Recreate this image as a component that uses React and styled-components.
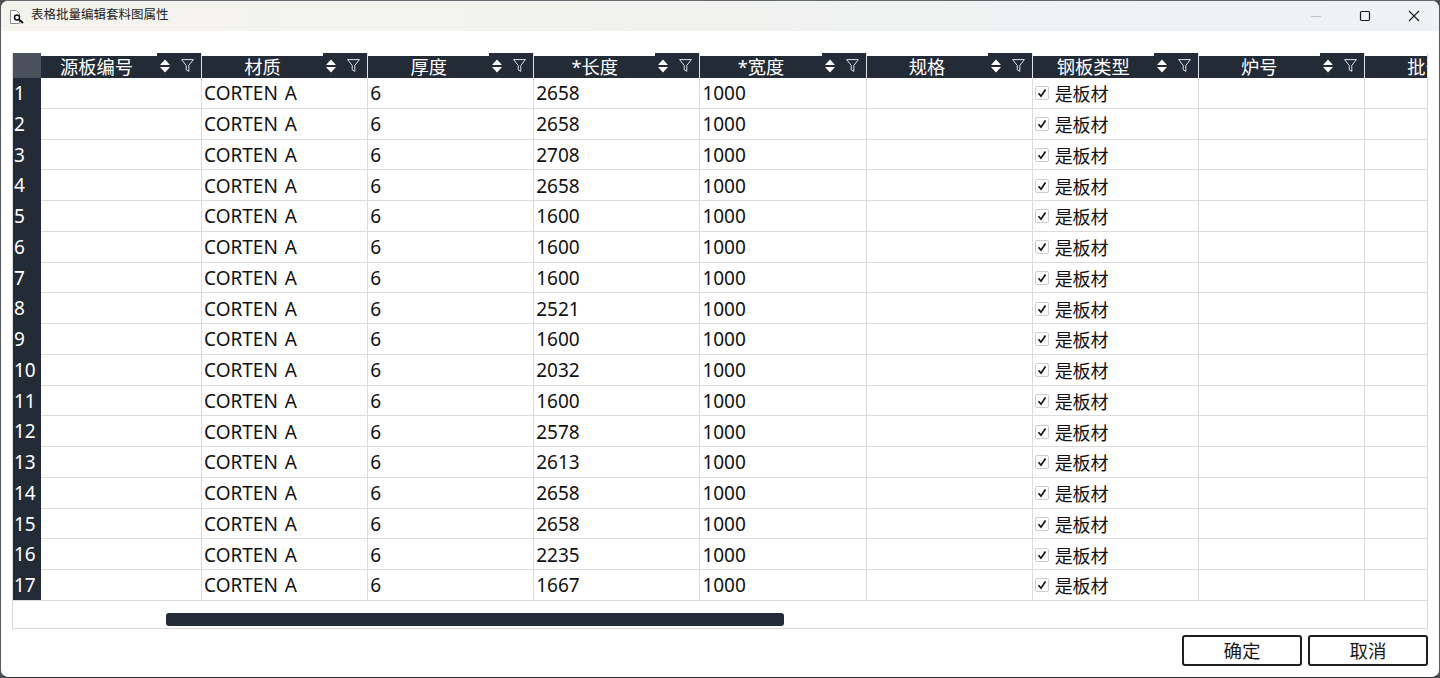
import React from 'react'
import styled, { createGlobalStyle } from 'styled-components'

const rows = [
  2658, 2658, 2708, 2658, 1600, 1600, 1600, 2521, 1600,
  2032, 1600, 2578, 2613, 2658, 2658, 2235, 1667
]

const columns = [
  { title: '源板编号', first: true },
  { title: '材质', value: () => 'CORTEN A' },
  { title: '厚度', value: () => '6' },
  { title: '*长度', value: (length) => length },
  { title: '*宽度', value: () => '1000' },
  { title: '规格' },
  { title: '钢板类型', check: true },
  { title: '炉号' },
  { title: '批号' }
]

const GlobalStyle = createGlobalStyle`
  html, body {
    margin: 0;
    padding: 0;
    background: #4b4f55;
  }
`

const Window = styled.div`
  width: 1440px;
  height: 678px;
  box-sizing: border-box;
  display: flex;
  flex-direction: column;
  overflow: hidden;
  background: #ffffff;
  border-radius: 8px;
  border-top: 1px solid #66696e;
  border-right: 1px solid #55585c;
  border-bottom: 1px solid #2b2d30;
  border-left: 1px solid #55585c;
  font-family: "Noto Sans", "Noto Sans CJK SC", sans-serif;
`

const TitleBar = styled.div`
  height: 30px;
  flex: none;
  display: flex;
  align-items: center;
  background: linear-gradient(90deg, #f5f3ee 0%, #f2f3f0 45%, #edf2f6 100%);
`

const AppIcon = styled.svg`
  width: 16px;
  height: 16px;
  margin-left: 9px;
  margin-right: 5px;
`

const TitleText = styled.div`
  flex: 1;
  font-size: 12.5px;
  line-height: 28px;
  height: 30px;
  color: #222222;
`

const WindowButton = styled.svg`
  width: 12px;
  height: 12px;
  margin-right: ${(props) => props.$gap}px;
`

const Content = styled.div`
  flex: 1;
  display: flex;
  flex-direction: column;
  padding: 22px 11px 11px 11px;
  min-height: 0;
`

const TableFrame = styled.div`
  width: 1416px;
  height: 576px;
  box-sizing: border-box;
  flex: none;
  border: 1px solid #d9d9d9;
  border-top: none;
  overflow: hidden;
  display: flex;
  flex-direction: column;
`

const HeaderRow = styled.div`
  display: flex;
  height: 25px;
  flex: none;
`

const Corner = styled.div`
  width: 28px;
  flex: none;
  background-color: #4b515b;
  background-image: radial-gradient(#5c626b 0.6px, transparent 0.7px);
  background-size: 4px 4px;
`

const HeaderCell = styled.div`
  width: ${(props) => (props.$first ? 161 : 166.14)}px;
  flex: none;
  box-sizing: border-box;
  display: flex;
  border-right: 1px solid #dfe1e3;
  background: #ffffff;
`

const HeaderLabel = styled.div`
  flex: 1;
  margin-top: 3px;
  background: #232b36;
  color: #ffffff;
  font-size: 18.25px;
  line-height: 22px;
  text-align: center;
  white-space: nowrap;
  padding-right: ${(props) => (props.$first ? 5 : 0)}px;
`

const HeaderTools = styled.div`
  width: 44px;
  flex: none;
  box-sizing: border-box;
  display: flex;
  align-items: center;
  gap: 11px;
  padding-left: 3px;
  background: #232b36;
`

const SortIcon = styled.svg`
  width: 10px;
  height: 14px;
`

const FilterIcon = styled.svg`
  width: 13px;
  height: 13px;
`

const Body = styled.div`
  display: flex;
  flex-direction: column;
  flex: none;
`

const Row = styled.div`
  display: flex;
  height: 30.76px;
  box-sizing: border-box;
`

const RowNumber = styled.div`
  width: 28px;
  flex: none;
  box-sizing: border-box;
  padding-left: 1px;
  background: #232b36;
  color: #ffffff;
  font-size: 19px;
  line-height: 31.5px;
`

const Cell = styled.div`
  width: ${(props) => (props.$first ? 161 : 166.14)}px;
  flex: none;
  box-sizing: border-box;
  display: flex;
  align-items: center;
  gap: 6px;
  padding-left: 2px;
  padding-top: 1px;
  border-bottom: 1px solid #dcdcdc;
  border-right: 1px solid #dcdcdc;
  color: #111111;
  font-size: 19px;
  word-spacing: 2px;
  white-space: nowrap;
`

const CheckBox = styled.span`
  width: 14px;
  height: 14px;
  box-sizing: border-box;
  flex: none;
  display: flex;
  align-items: center;
  justify-content: center;
  border: 1px solid #cdcdcd;
  border-radius: 2px;
  background: #ffffff;
`

const CheckLabel = styled.span`
  font-size: 18px;
`

const ScrollArea = styled.div`
  flex: 1;
  display: flex;
  align-items: flex-start;
  padding-top: 12px;
  padding-left: 153px;
  border-top: 1px solid #dcdcdc;
  margin-top: -1px;
`

const ScrollThumb = styled.div`
  width: 618px;
  height: 13px;
  background: #232b36;
  border-radius: 3px;
`

const Footer = styled.div`
  display: flex;
  justify-content: flex-end;
  gap: 6px;
  padding-top: 6px;
  width: 1416px;
`

const Button = styled.button`
  width: 120px;
  height: 31px;
  box-sizing: border-box;
  padding: 0;
  background: #ffffff;
  border: 2px solid #1f1f1f;
  border-radius: 3px;
  font-family: inherit;
  font-size: 18.5px;
  line-height: 27px;
  color: #1a1a1a;
`

function SortGlyph() {
  return (
    <SortIcon viewBox="0 0 10 14">
      <path d="M5 0.5 L9.6 5.4 Q9.8 6 9.2 6 H0.8 Q0.2 6 0.4 5.4 Z" fill="#ffffff" />
      <path d="M0.8 8 H9.2 Q9.8 8 9.6 8.6 L5 13.5 L0.4 8.6 Q0.2 8 0.8 8 Z" fill="#ffffff" />
    </SortIcon>
  )
}

function FilterGlyph() {
  return (
    <FilterIcon viewBox="0 0 13 13">
      <path
        d="M0.6 0.6 H12.4 L7.8 6.4 V12.4 L5.2 10.8 V6.4 Z"
        fill="none"
        stroke="#dfe2e5"
        strokeWidth="1"
      />
    </FilterIcon>
  )
}

function CheckGlyph() {
  return (
    <svg width="10" height="10" viewBox="0 0 10 10">
      <path d="M1.5 5.2 L4 8.2 L8.5 1.5" fill="none" stroke="#111111" strokeWidth="1.7" />
    </svg>
  )
}

export default function App() {
  return (
    <>
      <GlobalStyle />
      <Window>
        <TitleBar>
          <AppIcon viewBox="0 0 16 16">
            <path d="M0.5 2.5 H6.5 L9.5 5.5 V15.5 H0.5 Z" fill="#ffffff" stroke="#8a8f96" />
            <circle cx="7" cy="9.5" r="2.5" fill="#ffffff" stroke="#111111" strokeWidth="1.5" />
            <path d="M9 11.5 L13 15" stroke="#111111" strokeWidth="2" />
          </AppIcon>
          <TitleText>表格批量编辑套料图属性</TitleText>
          <WindowButton $gap={37} viewBox="0 0 12 12">
            <path d="M1 6.5 H11" stroke="#c4c8cc" strokeWidth="1" />
          </WindowButton>
          <WindowButton $gap={37} viewBox="0 0 12 12">
            <rect x="1.5" y="1.5" width="9" height="9" rx="1.2" fill="none" stroke="#1c1c1c" strokeWidth="1.2" />
          </WindowButton>
          <WindowButton $gap={19} viewBox="0 0 12 12">
            <path d="M1 1 L11 11 M11 1 L1 11" stroke="#1c1c1c" strokeWidth="1.1" />
          </WindowButton>
        </TitleBar>
        <Content>
          <TableFrame>
            <HeaderRow>
              <Corner />
              {columns.map((col) => (
                <HeaderCell key={col.title} $first={col.first}>
                  <HeaderLabel $first={col.first}>{col.title}</HeaderLabel>
                  <HeaderTools>
                    <SortGlyph />
                    <FilterGlyph />
                  </HeaderTools>
                </HeaderCell>
              ))}
            </HeaderRow>
            <Body>
              {rows.map((length, i) => (
                <Row key={i}>
                  <RowNumber>{i + 1}</RowNumber>
                  {columns.map((col) => (
                    <Cell key={col.title} $first={col.first}>
                      {col.check && (
                        <>
                          <CheckBox>
                            <CheckGlyph />
                          </CheckBox>
                          <CheckLabel>是板材</CheckLabel>
                        </>
                      )}
                      {col.value && col.value(length)}
                    </Cell>
                  ))}
                </Row>
              ))}
            </Body>
            <ScrollArea>
              <ScrollThumb />
            </ScrollArea>
          </TableFrame>
          <Footer>
            <Button>确定</Button>
            <Button>取消</Button>
          </Footer>
        </Content>
      </Window>
    </>
  )
}
